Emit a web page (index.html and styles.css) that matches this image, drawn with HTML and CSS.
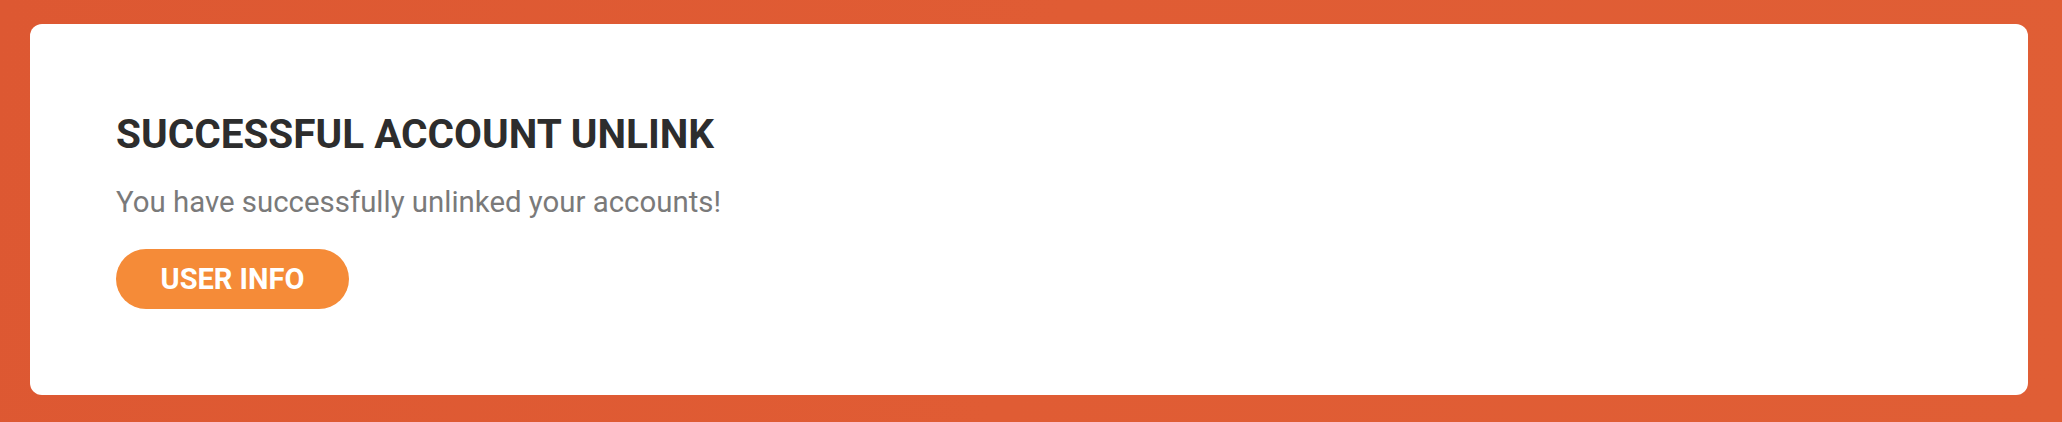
FILE: index.html
```html
<!DOCTYPE html>
<html lang="en">
<head>
<meta charset="utf-8">
<title>Successful account unlink</title>
<link rel="stylesheet" href="styles.css">
</head>
<body>
<main class="page">
  <section class="card">
    <h1 class="card-title">SUCCESSFUL ACCOUNT UNLINK</h1>
    <p class="card-text">You have successfully unlinked your accounts!</p>
    <a class="btn" href="#">USER INFO</a>
  </section>
</main>
</body>
</html>
```

FILE: styles.css
```css
html, body {
  margin: 0;
  padding: 0;
}
body {
  width: 2062px;
  height: 422px;
  overflow: hidden;
  background: linear-gradient(100deg, #dd5832 0%, #e05c34 50%, #e05e35 100%);
  font-family: Roboto, "Liberation Sans", sans-serif;
}
.page {
  box-sizing: border-box;
  height: 422px;
  padding: 24px 34px 27px 30px;
  display: flex;
}
.card {
  flex: 1;
  background: #ffffff;
  border-radius: 12px;
  padding: 90px 86px 0 86px;
  display: flex;
  flex-direction: column;
  align-items: flex-start;
}
.card-title {
  margin: 0 0 34px 0;
  font-size: 40.5px;
  line-height: 40px;
  font-weight: 700;
  color: #2d2d2d;
}
.card-text {
  margin: 0 0 32px 0;
  font-size: 29.4px;
  line-height: 29px;
  font-weight: 400;
  color: #7a7a7a;
}
.btn {
  display: flex;
  align-items: center;
  justify-content: center;
  width: 233px;
  height: 60px;
  border-radius: 30px;
  background: #f58b38;
  color: #ffffff;
  text-decoration: none;
  font-size: 29px;
  font-weight: 700;
}
```
